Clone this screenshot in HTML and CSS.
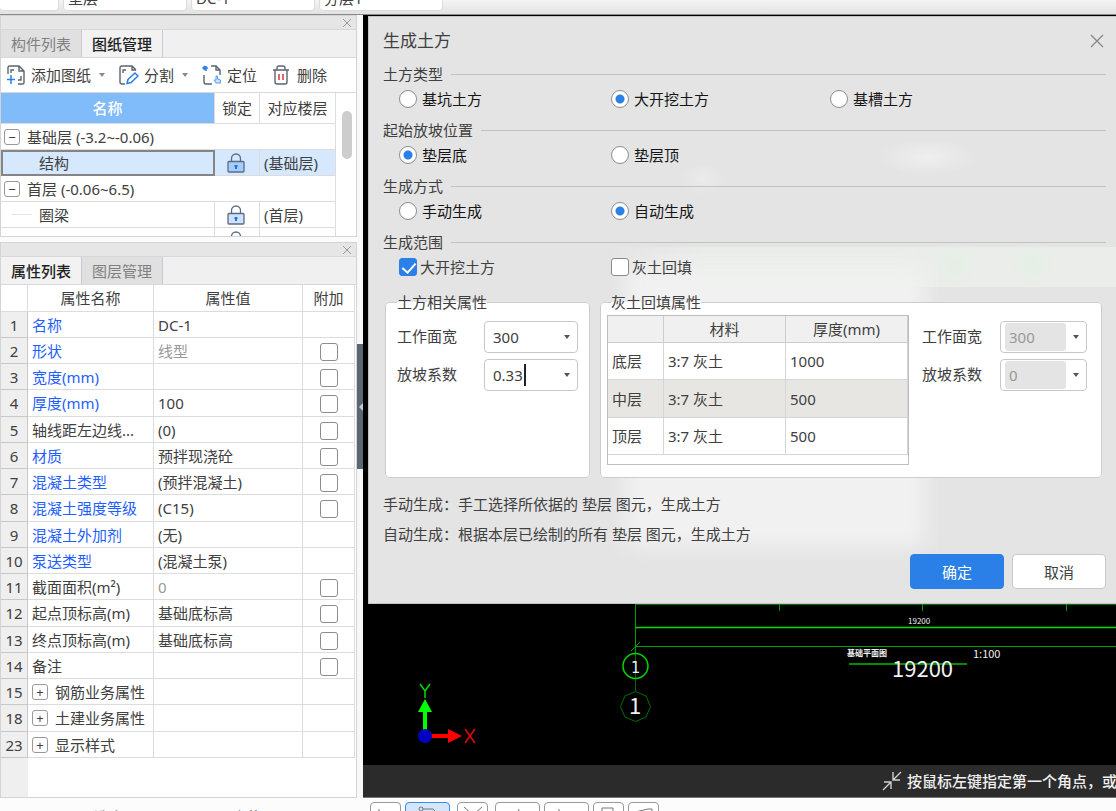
FILE: index.html
```html
<!DOCTYPE html>
<html lang="zh-CN">
<head>
<meta charset="utf-8">
<meta name="viewport" content="width=device-width, initial-scale=1">
<title>生成土方</title>
<link rel="stylesheet" href="styles.css">
</head>
<body>
<div class="app">
  <header class="topbar">
    <button class="topbar-combo topbar-combo-first" type="button" aria-label="楼层"></button>
    <button class="topbar-combo" type="button">垫层</button>
    <button class="topbar-combo" type="button">DC-1</button>
    <button class="topbar-combo" type="button">分层1</button>
  </header>

  <main class="workspace">
    <aside class="sidebar">
      <section class="panel">
        <div class="panel-bar"><button class="panel-close" type="button" aria-label="关闭"><svg width="10" height="10" viewBox="0 0 10 10"><path d="M1 1l8 8M9 1L1 9"/></svg></button></div>
        <nav class="tabs">
          <button class="tab" type="button">构件列表</button>
          <button class="tab tab-active" type="button">图纸管理</button>
        </nav>
        <div class="toolbar">
          <button class="tool" type="button">
            <svg width="20" height="20" viewBox="0 0 20 20"><path class="ink" d="M2 9V2.500Q2 1 3.500 1H13l5 5v11.500q0 1.500-1.500 1.500H12M13 1v5h5M5 8V5h3M12 15h3v-4"/><path class="blue" d="M5 10v9M1 14.500h8"/></svg>
            添加图纸</button>
          <button class="arrow" type="button" aria-label="添加图纸选项"></button>
          <button class="tool" type="button">
            <svg width="20" height="20" viewBox="0 0 20 20"><path class="ink" d="M6 19H3q-2 0-2-2V3q0-2 2-2h10l4 4M13 1v4h4M4 8V5h3"/><path class="blue" d="M8 18.500l1-4L16 8l3 3-7 6.500z"/></svg>
            分割</button>
          <button class="arrow" type="button" aria-label="分割选项"></button>
          <button class="tool" type="button">
            <svg width="20" height="20" viewBox="0 0 20 20"><path class="ink" d="M2 10v7q0 2 2 2h6M9 1h5l4 4v5M14 1v4h4"/><path class="blue" d="M1 3h5M3 1L1 3l2 2M4 1v5"/><path class="blue-light" d="M14 18l-2-3 2 0v-4h1.500v3l3 1v3z"/></svg>
            定位</button>
          <button class="tool tool-delete" type="button">
            <svg width="18" height="20" viewBox="0 0 18 20"><path class="ink" d="M1 5h16M5 5V3q0-2 2-2h4q2 0 2 2v2M3 5v12q0 2 2 2h8q2 0 2-2V5"/><path class="red" d="M7 9v6M11 9v6"/></svg>
            删除</button>
        </div>
        <div class="drawing-body">
          <table class="drawings">
            <colgroup><col><col class="col-lock"><col class="col-floor"></colgroup>
            <thead><tr><th class="th-selected">名称</th><th>锁定</th><th>对应楼层</th></tr></thead>
            <tbody>
              <tr><td colspan="3"><button class="expander" type="button" aria-label="折叠">−</button>基础层 (-3.2~-0.06)</td></tr>
              <tr class="row-selected"><td class="child child-current">结构</td><td class="lock"><svg width="18" height="20" viewBox="0 0 18 20"><path class="shackle" d="M4.500 9V5.500a4.500 4.500 0 0 1 9 0V9"/><rect x="1" y="8.500" width="16" height="10.500" rx="1"/><path class="key" d="M9 16v-4M7.500 13h3"/></svg></td><td>(基础层)</td></tr>
              <tr><td colspan="3"><button class="expander" type="button" aria-label="折叠">−</button>首层 (-0.06~6.5)</td></tr>
              <tr><td class="child">圈梁</td><td class="lock"><svg width="18" height="20" viewBox="0 0 18 20"><path class="shackle" d="M4.500 9V5.500a4.500 4.500 0 0 1 9 0V9"/><rect x="1" y="8.500" width="16" height="10.500" rx="1"/><path class="key" d="M9 16v-4M7.500 13h3"/></svg></td><td>(首层)</td></tr>
              <tr><td class="child"></td><td class="lock"><svg width="18" height="20" viewBox="0 0 18 20"><path class="shackle" d="M4.500 9V5.500a4.500 4.500 0 0 1 9 0V9"/><rect x="1" y="8.500" width="16" height="10.500" rx="1"/></svg></td><td></td></tr>
            </tbody>
          </table>
          <div class="scroll-track"><div class="scroll-thumb"></div></div>
        </div>
      </section>

      <section class="panel panel-props">
        <div class="panel-bar"><button class="panel-close" type="button" aria-label="关闭"><svg width="10" height="10" viewBox="0 0 10 10"><path d="M1 1l8 8M9 1L1 9"/></svg></button></div>
        <nav class="tabs">
          <button class="tab tab-active" type="button">属性列表</button>
          <button class="tab" type="button">图层管理</button>
        </nav>
        <div class="props-body">
          <table class="props">
            <colgroup><col class="col-num"><col class="col-name"><col><col class="col-extra"></colgroup>
            <thead><tr><th></th><th>属性名称</th><th>属性值</th><th>附加</th></tr></thead>
            <tbody>
              <tr><td>1</td><td class="link">名称</td><td>DC-1</td><td></td></tr>
              <tr><td>2</td><td class="link">形状</td><td class="muted">线型</td><td><input class="check" type="checkbox" aria-label="附加 形状"></td></tr>
              <tr><td>3</td><td class="link">宽度(mm)</td><td></td><td><input class="check" type="checkbox" aria-label="附加 宽度"></td></tr>
              <tr><td>4</td><td class="link">厚度(mm)</td><td>100</td><td><input class="check" type="checkbox" aria-label="附加 厚度"></td></tr>
              <tr><td>5</td><td>轴线距左边线...</td><td>(0)</td><td><input class="check" type="checkbox" aria-label="附加 轴线距左边线"></td></tr>
              <tr><td>6</td><td class="link">材质</td><td>预拌现浇砼</td><td><input class="check" type="checkbox" aria-label="附加 材质"></td></tr>
              <tr><td>7</td><td class="link">混凝土类型</td><td>(预拌混凝土)</td><td><input class="check" type="checkbox" aria-label="附加 混凝土类型"></td></tr>
              <tr><td>8</td><td class="link">混凝土强度等级</td><td>(C15)</td><td><input class="check" type="checkbox" aria-label="附加 混凝土强度等级"></td></tr>
              <tr><td>9</td><td class="link">混凝土外加剂</td><td>(无)</td><td></td></tr>
              <tr><td>10</td><td class="link">泵送类型</td><td>(混凝土泵)</td><td></td></tr>
              <tr><td>11</td><td>截面面积(m²)</td><td class="muted">0</td><td><input class="check" type="checkbox" aria-label="附加 截面面积"></td></tr>
              <tr><td>12</td><td>起点顶标高(m)</td><td>基础底标高</td><td><input class="check" type="checkbox" aria-label="附加 起点顶标高"></td></tr>
              <tr><td>13</td><td>终点顶标高(m)</td><td>基础底标高</td><td><input class="check" type="checkbox" aria-label="附加 终点顶标高"></td></tr>
              <tr><td>14</td><td>备注</td><td></td><td><input class="check" type="checkbox" aria-label="附加 备注"></td></tr>
              <tr><td>15</td><td><button class="expander" type="button" aria-label="展开">+</button>钢筋业务属性</td><td></td><td></td></tr>
              <tr><td>18</td><td><button class="expander" type="button" aria-label="展开">+</button>土建业务属性</td><td></td><td></td></tr>
              <tr><td>23</td><td><button class="expander" type="button" aria-label="展开">+</button>显示样式</td><td></td><td></td></tr>
            </tbody>
          </table>
        </div>
      </section>
    </aside>

    <div class="gutter"><button class="collapse" type="button" aria-label="收起侧栏"><svg width="5" height="10" viewBox="0 0 5 10"><path d="M5 1v8L1 5z"/></svg></button></div>

    <section class="stage">
      <div class="canvas">
        <svg class="drawing" viewBox="363 15 753 750" preserveAspectRatio="xMinYMin slice">
          <path class="axis-dark" d="M635 604.500h481"/>
          <path class="axis-bright" d="M635 627.500h481"/>
          <path class="axis-mid" d="M635 646.500h481M635.500 600v54M631 651l9-9"/>
          <path class="axis-mid" d="M779.500 604v7M922.500 604v7M1066.500 604v7"/>
          <path class="axis-dark" d="M635.500 654v37"/>
          <circle class="axis-circle" cx="635.500" cy="666" r="12.500"/>
          <path class="axis-dark" d="M635.500 691.500l10.500 4.500 4.500 10.500-4.500 10.500-10.500 4.500-10.500-4.500-4.500-10.500 4.500-10.500z"/>
          <text class="t-label" x="631" y="673">1</text>
          <text class="t-node" x="629" y="714">1</text>
          <text class="t-small" x="908" y="624">19200</text>
          <text class="t-title" x="847" y="656">基础平面图</text>
          <path class="title-line" d="M849 664h118"/>
          <text class="t-scale" x="973" y="658">1:100</text>
          <text class="t-big" x="892" y="677">19200</text>
          <path class="y-axis" d="M423 730v-18h-5l7-13 7 13h-5v18z"/>
          <path class="y-letter" d="M420 684l5 7 5-7M425 691v7"/>
          <path class="x-axis" d="M431 734h17v-5l14 7-14 7v-5h-17z"/>
          <path class="x-letter" d="M465 729l10 14M475 729l-10 14"/>
          <circle class="origin" cx="425" cy="736" r="7"/>
        </svg>
      </div>
      <div class="prompt">
        <svg width="20" height="20" viewBox="0 0 20 20"><path d="M1 19L9 11M2 11h7v7M19 1L11 9M11 1v8h7"/></svg>
        <span>按鼠标左键指定第一个角点，或</span>
      </div>

      <div class="dialog" role="dialog" aria-labelledby="dialog-title">
        <div class="dialog-head">
          <h1 id="dialog-title">生成土方</h1>
          <button class="dialog-close" type="button" aria-label="关闭"><svg width="14" height="14" viewBox="0 0 14 14"><path d="M1 1l12 12M13 1L1 13"/></svg></button>
        </div>
        <div class="section">
          <h2>土方类型</h2>
          <div class="options">
            <label class="option"><input class="radio" type="radio" name="kind">基坑土方</label>
            <label class="option"><input class="radio" type="radio" name="kind" checked>大开挖土方</label>
            <label class="option"><input class="radio" type="radio" name="kind">基槽土方</label>
          </div>
        </div>
        <div class="section">
          <h2>起始放坡位置</h2>
          <div class="options">
            <label class="option"><input class="radio" type="radio" name="start" checked>垫层底</label>
            <label class="option"><input class="radio" type="radio" name="start">垫层顶</label>
          </div>
        </div>
        <div class="section">
          <h2>生成方式</h2>
          <div class="options">
            <label class="option"><input class="radio" type="radio" name="mode">手动生成</label>
            <label class="option"><input class="radio" type="radio" name="mode" checked>自动生成</label>
          </div>
        </div>
        <div class="section">
          <h2>生成范围</h2>
          <div class="options">
            <label class="option option-check"><input class="check" type="checkbox" checked>大开挖土方</label>
            <label class="option option-check"><input class="check" type="checkbox">灰土回填</label>
          </div>
        </div>

        <div class="groups">
          <fieldset class="group group-soil">
            <legend>土方相关属性</legend>
            <div class="fields">
              <label for="soil-width">工作面宽</label>
              <div class="combo"><input id="soil-width" type="text" value="300"><button class="arrow" type="button" aria-label="选择工作面宽"></button></div>
              <label for="soil-slope">放坡系数</label>
              <div class="combo"><input id="soil-slope" type="text" value="0.33"><span class="caret"></span><button class="arrow" type="button" aria-label="选择放坡系数"></button></div>
            </div>
          </fieldset>
          <fieldset class="group group-fill">
            <legend>灰土回填属性</legend>
            <div class="fill-body">
              <div class="fill-frame">
                <table class="fill-table">
                  <colgroup><col class="col-layer"><col><col></colgroup>
                  <thead><tr><th></th><th>材料</th><th>厚度(mm)</th></tr></thead>
                  <tbody>
                    <tr><td>底层</td><td>3:7 灰土</td><td>1000</td></tr>
                    <tr class="alt"><td>中层</td><td>3:7 灰土</td><td>500</td></tr>
                    <tr><td>顶层</td><td>3:7 灰土</td><td>500</td></tr>
                  </tbody>
                </table>
              </div>
              <div class="fields">
                <label for="fill-width">工作面宽</label>
                <div class="combo combo-off"><input id="fill-width" type="text" value="300" disabled><button class="arrow" type="button" aria-label="选择工作面宽"></button></div>
                <label for="fill-slope">放坡系数</label>
                <div class="combo combo-off"><input id="fill-slope" type="text" value="0" disabled><button class="arrow" type="button" aria-label="选择放坡系数"></button></div>
              </div>
            </div>
          </fieldset>
        </div>
        <p class="note">手动生成：手工选择所依据的 垫层 图元，生成土方</p>
        <p class="note">自动生成：根据本层已绘制的所有 垫层 图元，生成土方</p>
        <div class="actions">
          <button class="btn btn-primary" type="button">确定</button>
          <button class="btn" type="button">取消</button>
        </div>
      </div>
    </section>
  </main>

  <footer class="statusbar">
    <div class="counts"><span>选中图元:</span><span>隐藏图元:</span></div>
    <div class="snaps">
      <button class="snap" type="button" aria-label="正交"><svg width="20" height="20" viewBox="0 0 20 20"><path d="M3 4v13h14"/></svg></button>
      <button class="snap snap-wide snap-on" type="button" aria-label="对象捕捉"><svg width="20" height="20" viewBox="0 0 20 20"><circle cx="3" cy="4" r="2"/><path d="M5 4h10l3 3v11H3V6"/></svg></button>
      <button class="snap snap-apart" type="button" aria-label="交点"><svg width="20" height="20" viewBox="0 0 20 20"><path d="M1 2l18 16M19 2L1 18"/></svg></button>
      <button class="snap snap-wide snap-apart" type="button" aria-label="垂点"><svg width="20" height="20" viewBox="0 0 20 20"><path d="M11 4l-3 12"/></svg></button>
      <button class="snap snap-wide" type="button" aria-label="中点"><svg width="20" height="20" viewBox="0 0 20 20"><path d="M2 4v13h15"/></svg></button>
      <button class="snap" type="button" aria-label="顶点"><svg width="20" height="20" viewBox="0 0 20 20"><path d="M3 3h11v4h3M3 3v14h11"/></svg></button>
      <button class="snap" type="button" aria-label="坐标"><svg width="20" height="20" viewBox="0 0 20 20"><path d="M1 7l13-3h4v3L6 12"/></svg></button>
    </div>
  </footer>
</div>
</body>
</html>
```
FILE: styles.css
```css
* { box-sizing: border-box; }

body {
  margin: 0;
  font: 15px/20px "Noto Sans", "Noto Sans CJK SC", sans-serif;
  color: #404040;
  background: #f1f1f1;
}

button, input { font: inherit; color: inherit; }
button { padding: 0; border: 0; background: none; white-space: nowrap; }
svg { display: block; fill: none; flex: none; }
table { border-collapse: separate; border-spacing: 0; table-layout: fixed; width: 100%; }
th { font-weight: 400; }
h1, h2, p { margin: 0; font-weight: 400; }

.app { display: flex; flex-direction: column; height: 100vh; overflow: hidden; }

/* top bar */
.topbar {
  display: flex;
  align-items: flex-end;
  gap: 4px;
  flex: none;
  height: 15px;
  padding-bottom: 3px;
  overflow: hidden;
  background: linear-gradient(#f4f4f4, #e2e2e2);
  border-bottom: 1px solid #8a8a8a;
}
.topbar-combo {
  flex: none;
  width: 124px;
  height: 26px;
  padding-left: 4px;
  text-align: left;
  background: #fff;
  border: 1px solid #dcdcdc;
  border-radius: 4px;
}
.topbar-combo-first { width: 60px; margin-left: -1px; }

.workspace { display: flex; flex: 1; min-height: 0; }

/* sidebar */
.sidebar { display: flex; flex-direction: column; gap: 5px; flex: 0 0 357px; background: #fbfbfb; }
.panel { display: flex; flex-direction: column; flex: none; height: 222px; border: 1px solid #d4d4d4; background: #fff; overflow: hidden; }
.panel-props { flex: 1; height: auto; min-height: 0; }
.panel-bar { display: flex; justify-content: flex-end; align-items: center; flex: none; height: 14px; padding-right: 4px; background: #e6e6e6; border-bottom: 1px solid #d8d8d8; }
.panel-close svg { stroke: #999; }
.tabs { display: flex; flex: none; height: 28px; background: #f0f0f0; border-bottom: 1px solid #d8d8d8; }
.tab { width: 81px; color: #808080; background: #e0e0e0; border-right: 1px solid #c8ccd0; }
.tab-active { color: #222; background: #f2f2f2; font-weight: 500; }

.toolbar { display: flex; align-items: center; flex: none; height: 35px; padding-left: 5px; border-bottom: 1px solid #d8d8d8; }
.tool { display: flex; align-items: center; gap: 5px; margin-right: 8px; }
.tool + .tool { margin-left: 7px; }
.tool-delete { gap: 7px; }
.toolbar .arrow { margin-right: 14px; }
.ink { stroke: #5c6470; stroke-width: 1.4; }
.blue { stroke: #2b7fe6; stroke-width: 1.5; }
.blue-light { stroke: #5b9df0; fill: #cfe3fc; }
.red { stroke: #d9363e; stroke-width: 1.5; }

.arrow { width: 6px; height: 4px; flex: none; background: #555; clip-path: polygon(0 0, 100% 0, 50% 100%); }
.toolbar .arrow { background: #8a8a8a; }

.drawing-body { display: flex; flex: 1; min-height: 0; overflow: hidden; }
.drawings { flex: 1; height: 0; }
.col-lock { width: 45px; }
.col-floor { width: 76px; }
.drawings th { height: 31px; padding: 0; border-right: 1px solid #dcdcdc; border-bottom: 1px solid #dcdcdc; }
.drawings .th-selected { color: #fff; font-weight: 500; background: #80bbfa; }
.drawings td { height: 26px; padding: 0 0 0 4px; border-right: 1px solid #dcdcdc; border-bottom: 1px solid #dcdcdc; white-space: nowrap; }
.drawings .child { padding-left: 38px; background: linear-gradient(#e4e4e4, #e4e4e4) 11px 12px / 20px 1px no-repeat; }
.drawings .child-current { padding-left: 36px; border: 2px solid #858585; }
.row-selected { background: #d5e8fe; }
.lock svg { margin: 0 auto 0 8px; stroke: #5c6b84; stroke-width: 1.3; }
.lock rect { fill: #cfe2fb; }
.row-selected .lock rect { fill: #a5cdfb; }
.lock .key { stroke: #1a73e8; stroke-width: 2; }
.scroll-track { flex: 0 0 20px; padding: 18px 4px 0 6px; }
.scroll-thumb { height: 48px; border-radius: 5px; background: #cdcdcd; }

.expander { width: 16px; height: 16px; margin: 0 7px 0 0; font-size: 13px; line-height: 12px; text-align: center; vertical-align: 1px; border: 1px solid #999; border-radius: 3px; background: #fff; }
.drawings .expander { margin-left: -1px; }

.props-body { flex: 1; min-height: 0; overflow: hidden; background: linear-gradient(90deg, #efefef 27px, #fff 27px); }
.props { width: 354px; }
.col-num { width: 27px; }
.col-name { width: 126px; }
.col-extra { width: 52px; }
.props th { height: 27px; padding: 0; background: #fff; border-right: 1px solid #dcdcdc; border-bottom: 1px solid #dcdcdc; }
.props td { height: 26px; padding: 0 0 0 4px; background: #fff; border-right: 1px solid #dcdcdc; border-bottom: 1px solid #dcdcdc; white-space: nowrap; }
.props tr:nth-child(4n) td { height: 27px; }
.props td:first-child { padding: 0; text-align: center; background: #efefef; border-color: #c8c8c8; }
.props td:last-child { padding: 0; text-align: center; }
.props .link { color: #1f5fff; }
.props .muted { color: #999; }

.check {
  appearance: none;
  width: 18px;
  height: 18px;
  margin: 0;
  vertical-align: middle;
  background: #fff;
  border: 1px solid #8c8c8c;
  border-radius: 3px;
}
.check:checked { position: relative; background: #2a80e6; border-color: #2a80e6; }
.check:checked::after { content: ""; position: absolute; left: 5px; top: 1px; width: 6px; height: 11px; border: solid #fff; border-width: 0 2px 2px 0; transform: rotate(42deg); }

/* divider between sidebar and canvas */
.gutter { display: flex; flex: 0 0 6px; align-items: center; background: #f8f8f8; }
.collapse { display: flex; align-items: center; justify-content: flex-end; width: 6px; height: 125px; background: #5b6674; }
.collapse path { fill: #c4c9d0; }

/* canvas */
.stage { position: relative; display: flex; flex-direction: column; flex: 1; min-width: 0; background: #000; overflow: hidden; }
.canvas { flex: 1; min-height: 0; }
.drawing { width: 100%; height: 100%; }
.axis-dark { stroke: #006e00; }
.axis-mid { stroke: #00a000; }
.axis-bright { stroke: #00e000; stroke-width: 1.3; }
.axis-circle { stroke: #00d800; stroke-width: 1.5; }
.title-line { stroke: #008c00; stroke-width: 2; }
.drawing text { fill: #f0f0f0; }
.drawing .t-label { font: 16px "DejaVu Sans Condensed", sans-serif; }
.drawing .t-node { font: 22px "Noto Sans CJK SC", sans-serif; }
.drawing .t-small { font: 8px "Noto Sans CJK SC", sans-serif; }
.drawing .t-title { font: bold 8px "Noto Sans CJK SC", sans-serif; }
.drawing .t-scale { font: 11px "Noto Sans CJK SC", sans-serif; }
.drawing .t-big { font: 22px "Noto Sans CJK SC", sans-serif; }
.y-axis { fill: #0f0; }
.x-axis { fill: #f00; }
.y-letter { stroke: #0d0; stroke-width: 1.5; }
.x-letter { stroke: #e00; stroke-width: 1.5; }
.origin { fill: #0000c0; }

.prompt { display: flex; align-items: center; gap: 5px; flex: none; height: 33px; padding-left: 519px; color: #f0f0f0; font-weight: 500; background: #2b2b2b; border-bottom: 1px solid #777; white-space: nowrap; }
.prompt svg { stroke: #d0d0d0; stroke-width: 1.4; }

/* dialog */
.dialog {
  position: absolute;
  isolation: isolate;
  overflow: hidden;
  top: 1px;
  left: 5px;
  right: 0;
  padding: 0 10px 14px 14px;
  border: 1px solid #c4c4c4;
  border-width: 1px 0 1px 1px;
  background:
    radial-gradient(ellipse 50px 18px at 558px 140px, #efefef, transparent),
    radial-gradient(ellipse 22px 16px at 334px 162px, #ebebeb, transparent),
    radial-gradient(ellipse 24px 24px at 586px 248px, #e4efe4, transparent),
    radial-gradient(ellipse 24px 24px at 664px 248px, #e4efe4, transparent),
    linear-gradient(90deg, transparent 240px, #ebedeb 340px) 0 230px / 100% 40px no-repeat,
    #e4e4e4;
}
.dialog::before {
  content: "";
  position: absolute;
  z-index: -1;
  left: 256px;
  top: 250px;
  width: 300px;
  height: 280px;
  background: #f0f1f0;
  filter: blur(10px);
}
.dialog-head { display: flex; align-items: center; justify-content: space-between; height: 45px; padding-top: 3px; }
.dialog-head h1 { font-size: 17px; line-height: 24px; }
.dialog-close svg { stroke: #888; stroke-width: 1.3; margin-right: 2px; }
.section { height: 56px; }
.section h2 { display: flex; align-items: center; gap: 8px; height: 24px; font-size: 15px; line-height: 24px; }
.section h2::after { content: ""; flex: 1; height: 1px; background: #c2c2c2; }
.options { display: grid; grid-template-columns: 212fr 219fr 276fr; padding-left: 16px; }
.option { display: flex; align-items: center; gap: 5px; height: 26px; color: #151515; }
.option-check { gap: 3px; color: #404040; }
.radio { appearance: none; width: 18px; height: 18px; margin: 0; border: 1px solid #8c8c8c; border-radius: 50%; background: #fff; }
.radio:checked { background: radial-gradient(circle, #2a80e6 4px, #fff 5px); }

.groups { display: grid; grid-template-columns: 205fr 502fr; gap: 10px; padding: 5px 4px 0 2px; }
.group { min-width: 0; height: 187px; margin: 0; padding: 8px 14px 0 11px; border: 1px solid #cdcdcd; border-radius: 4px; background: #fff; }
.group-fill { padding: 2px 14px 0 6px; }
.group legend { height: 22px; padding: 0; line-height: 22px; }
.group-fill legend { margin-left: 4px; }
.fields { display: grid; grid-template-columns: 1fr auto; align-content: start; align-items: center; row-gap: 6px; }
.group-soil .fields { margin-right: -3px; }
.fields label { padding-bottom: 2px; }
.combo { position: relative; display: flex; align-items: center; width: 94px; height: 32px; padding-right: 7px; border: 1px solid #c8c8c8; border-radius: 4px; background: #fff; }
.combo input { flex: 1; min-width: 0; height: 28px; padding: 0 0 0 8px; border: 0; outline: 0; background: none; }
.combo-off { width: 87px; padding-left: 4px; }
.combo-off input { margin-right: 7px; padding-left: 4px; color: #999; background: #e4e4e4; border-radius: 3px; }
.caret { position: absolute; left: 39px; top: 4px; width: 2px; height: 22px; background: #222; }
.fill-body { display: grid; grid-template-columns: 302fr 165fr; gap: 13px; }
.fill-body .fields { padding-top: 6px; }
.fill-frame { height: 150px; border: 1px solid #bdbdbd; }
.col-layer { width: 56px; }
.fill-table th { height: 27px; padding: 0; background: #f0f0f0; border-right: 1px solid #ccc; border-bottom: 1px solid #ccc; }
.fill-table td { height: 37px; padding: 0 0 0 4px; border-right: 1px solid #d6d6d6; border-bottom: 1px solid #d6d6d6; }
.fill-table .alt td { height: 38px; background: #e8e6e2; }

.note { line-height: 30px; }
.groups + .note { margin-top: 11px; }
.actions { display: flex; justify-content: flex-end; gap: 8px; margin-top: 5px; }
.btn { width: 94px; height: 35px; border: 1px solid #c8c8c8; border-radius: 4px; background: #fff; }
.btn-primary { color: #fff; background: #2a80e6; border-color: #2a80e6; }

/* bottom bar */
.statusbar { display: flex; flex: none; height: 13px; padding-top: 4px; overflow: hidden; background: #fcfcfc; }
.counts { display: flex; gap: 73px; flex: 0 0 370px; padding: 5px 0 0 94px; color: #666; }
.snaps { display: flex; gap: 4px; }
.snap { display: flex; justify-content: center; width: 31px; height: 26px; padding-top: 2px; border: 1px solid #999; border-radius: 4px; background: #fff; }
.snap svg { stroke: #777; }
.snap-apart { margin-left: 3px; }
.snap-wide { width: 45px; }
.snap-on { border-color: #3b8ae8; background: #d5e6fc; }
```
